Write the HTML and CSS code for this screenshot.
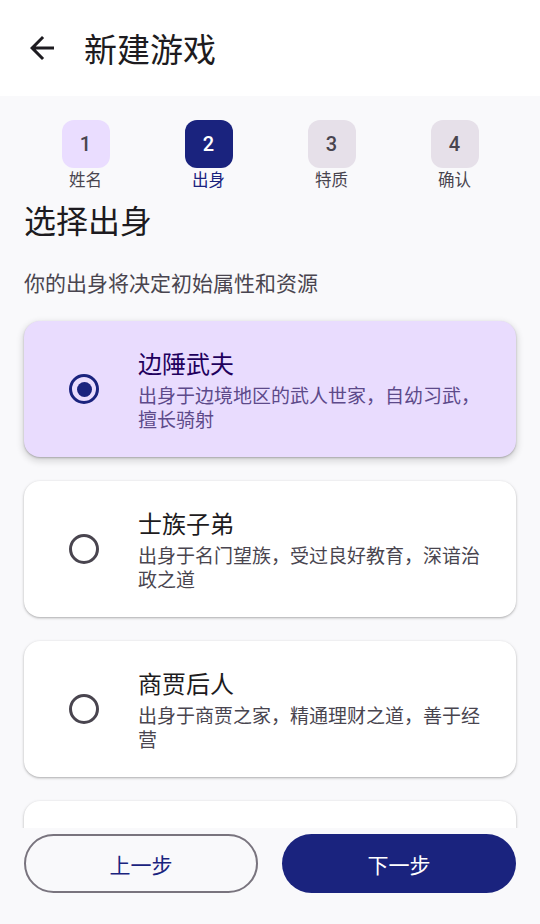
FILE: index.html
```html
<!DOCTYPE html>
<html lang="zh">
<head>
<meta charset="utf-8">
<link rel="stylesheet" href="styles.css">
</head>
<body>
<div class="app">
  <header class="topbar">
    <button class="back" aria-label="返回">
      <svg viewBox="0 0 24 24" width="36" height="36"><path d="M20 11H7.83l5.59-5.59L12 4l-8 8 8 8 1.41-1.41L7.83 13H20v-2z" fill="#1d1b20"/></svg>
    </button>
    <h1 class="title">新建游戏</h1>
  </header>
  <main class="content">
    <div class="scroll">
      <div class="steps">
        <div class="step done"><div class="num">1</div><div class="label">姓名</div></div>
        <div class="step active"><div class="num">2</div><div class="label">出身</div></div>
        <div class="step"><div class="num">3</div><div class="label">特质</div></div>
        <div class="step"><div class="num">4</div><div class="label">确认</div></div>
      </div>
      <h2 class="section-title">选择出身</h2>
      <p class="section-sub">你的出身将决定初始属性和资源</p>
      <div class="cards">
        <div class="card selected">
          <div class="radio-box"><span class="radio on"></span></div>
          <div class="card-text">
            <div class="card-title">边陲武夫</div>
            <div class="card-desc">出身于边境地区的武人世家，自幼习武，擅长骑射</div>
          </div>
        </div>
        <div class="card">
          <div class="radio-box"><span class="radio"></span></div>
          <div class="card-text">
            <div class="card-title">士族子弟</div>
            <div class="card-desc">出身于名门望族，受过良好教育，深谙治政之道</div>
          </div>
        </div>
        <div class="card">
          <div class="radio-box"><span class="radio"></span></div>
          <div class="card-text">
            <div class="card-title">商贾后人</div>
            <div class="card-desc">出身于商贾之家，精通理财之道，善于经营</div>
          </div>
        </div>
        <div class="card"></div>
      </div>
    </div>
    <div class="actions">
      <button class="btn outline">上一步</button>
      <button class="btn filled">下一步</button>
    </div>
  </main>
</div>
</body>
</html>
```

FILE: styles.css
```css
* { box-sizing: border-box; }
html, body { margin: 0; padding: 0; }
body {
  width: 540px;
  height: 924px;
  overflow: hidden;
  font-family: Roboto, "Noto Sans CJK SC", sans-serif;
  background: #f9f9fb;
  color: #1d1b20;
}
.app { display: flex; flex-direction: column; height: 924px; }
.topbar {
  height: 96px;
  background: #ffffff;
  display: flex;
  align-items: center;
  padding-left: 24px;
  flex: none;
}
.back {
  width: 36px; height: 36px; padding: 0; border: 0; background: none;
  display: flex; align-items: center; justify-content: center;
}
.back svg { display: block; }
.title {
  margin: 0 0 0 24px;
  font-size: 33px;
  font-weight: 400;
  line-height: 40px;
  font-family: "Noto Sans CJK SC", sans-serif;
  color: #1d1b20;
}
.content { flex: 1; display: flex; flex-direction: column; min-height: 0; }
.scroll {
  height: 732px;
  overflow: hidden;
  padding: 24px 24px 0;
  flex: none;
}
.steps { display: grid; grid-template-columns: repeat(4, 1fr); }
.step { display: flex; flex-direction: column; align-items: center; }
.num {
  width: 48px; height: 48px; border-radius: 12px;
  background: #e6e0e9;
  display: flex; align-items: center; justify-content: center;
  font-family: Roboto, sans-serif;
  font-size: 20px; font-weight: 500; color: #49454f;
}
.step.done .num { background: #eaddff; }
.step.active .num { background: #1a237e; color: #ffffff; }
.label {
  font-family: "Noto Sans CJK SC", sans-serif;
  font-size: 16.5px; line-height: 23px; color: #49454f;
}
.step.active .label { color: #1a237e; }
.section-title {
  margin: 8px 0 0;
  font-family: "Noto Sans CJK SC", sans-serif;
  font-size: 32px; font-weight: 400; line-height: 40px; color: #1d1b20;
}
.section-sub {
  margin: 29px 0 0;
  font-family: "Noto Sans CJK SC", sans-serif;
  font-size: 21px; line-height: 28px; color: #49454f;
}
.cards { display: flex; flex-direction: column; gap: 24px; margin-top: 25px; }
.card {
  display: flex; align-items: center;
  height: 136px;
  flex: none;
  background: #ffffff;
  border-radius: 16px;
  padding: 0 24px 0 24px;
  box-shadow: 0 1px 2px rgba(0,0,0,0.22), 0 1px 3px 1px rgba(0,0,0,0.08);
}
.card.selected {
  background: #e9dcfe;
  box-shadow: 0 1px 2px rgba(0,0,0,0.25), 0 3px 6px 2px rgba(0,0,0,0.12);
}
.radio-box { width: 72px; height: 72px; display: flex; align-items: center; justify-content: center; flex: none; }
.radio {
  width: 30px; height: 30px; border-radius: 50%;
  border: 3px solid #49454f;
  display: flex; align-items: center; justify-content: center;
}
.radio.on { border-color: #1a237e; }
.radio.on::after {
  content: ""; width: 15px; height: 15px; border-radius: 50%; background: #1a237e;
}
.card-text { margin-left: 18px; flex: 1; font-family: "Noto Sans CJK SC", sans-serif; }
.card-title { font-size: 24px; line-height: 32px; color: #1d1b20; }
.card-desc { margin-top: 4px; font-size: 19px; line-height: 24px; color: #49454f; }
.selected .card-title { color: #21005d; }
.selected .card-desc { color: #5d4a8a; }
.actions {
  display: grid; grid-template-columns: 1fr 1fr; gap: 24px;
  padding: 6px 24px 0;
}
.btn {
  height: 59px; border-radius: 30px;
  font-family: "Noto Sans CJK SC", sans-serif;
  font-size: 21px; line-height: 28px;
  display: flex; align-items: center; justify-content: center;
}
.btn.outline { background: transparent; border: 2px solid #79747e; color: #1a237e; }
.btn.filled { background: #1a237e; border: 0; color: #ffffff; }
```
